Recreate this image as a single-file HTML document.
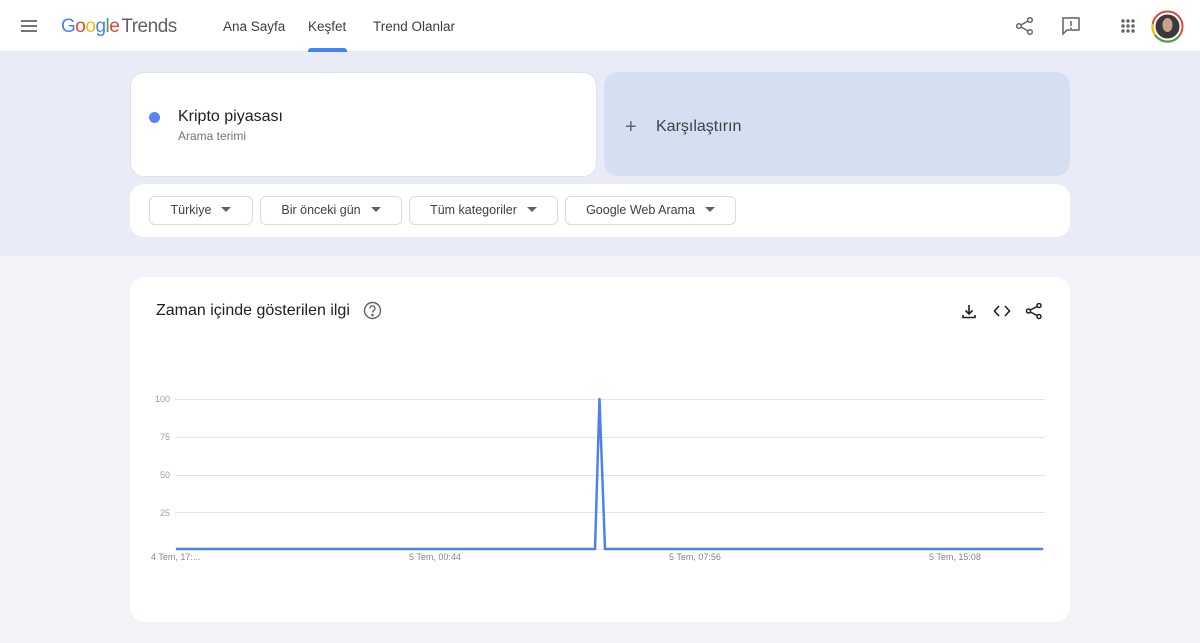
<!DOCTYPE html>
<html><head><meta charset="utf-8"><style>
*{box-sizing:border-box;margin:0;padding:0}
body{width:1200px;height:643px;overflow:hidden;background:#f1f3f8;font-family:"Liberation Sans",Arial,sans-serif;color:#202124;position:relative}
.hdr{position:absolute;left:0;top:0;width:1200px;height:52px;background:#fff;border-bottom:1px solid #e3e6ee}
.band{position:absolute;left:0;top:52px;width:1200px;height:204px;background:#e9ecf6}
.abs{position:absolute}
.nav{position:absolute;top:19px;font-size:13.5px;color:#3c4043}
.card{position:absolute;background:#fff;border-radius:14px}
.chip{position:absolute;top:196px;height:29px;border:1px solid #dadce0;border-radius:6px;font-size:12.5px;color:#3c4043;line-height:27px;text-align:center}
.chip:after{content:"";display:inline-block;margin-left:10px;border-left:5px solid transparent;border-right:5px solid transparent;border-top:5px solid #5f6368;vertical-align:2px}
.yl{position:absolute;left:140px;width:30px;text-align:right;font-size:9px;color:#9aa0a6}
.xl{position:absolute;top:552px;font-size:9px;color:#80868b}
</style></head><body>
<div class="hdr"></div>
<div class="band"></div>
<svg class="abs" style="left:20px;top:18px" width="18" height="16"><path d="M1 3h16M1 8h16M1 13h16" stroke="#5f6368" stroke-width="1.8"/></svg>
<div class="abs" style="left:61px;top:16px;font-size:19px;letter-spacing:-0.5px"><span style="color:#4285f4">G</span><span style="color:#ea4335">o</span><span style="color:#fbbc05">o</span><span style="color:#4285f4">g</span><span style="color:#34a853">l</span><span style="color:#ea4335">e</span><span style="color:#5f6368;margin-left:2px">Trends</span></div>
<div class="nav" style="left:223px">Ana Sayfa</div>
<div class="nav" style="left:308px">Keşfet</div>
<div class="abs" style="left:308px;top:48px;width:39px;height:4px;background:#4285f4;border-radius:3px 3px 0 0"></div>
<div class="nav" style="left:373px">Trend Olanlar</div>
<svg class="abs" style="left:1015px;top:16px" width="20" height="20" viewBox="0 0 20 20" fill="none" stroke="#5f6368" stroke-width="1.5"><circle cx="15" cy="4" r="2.3"/><circle cx="4" cy="10" r="2.3"/><circle cx="15" cy="16" r="2.3"/><path d="M6 9l7-4M6 11l7 4"/></svg>
<svg class="abs" style="left:1061px;top:16px" width="20" height="20" viewBox="0 0 20 20" fill="none" stroke="#5f6368" stroke-width="1.5"><path d="M2 2h16v12H6l-4 4z"/><path d="M10 5v5M10 11.5v1.5"/></svg>
<svg class="abs" style="left:1120px;top:18px" width="16" height="16" fill="#5f6368"><circle cx="3" cy="3" r="1.7"/><circle cx="8" cy="3" r="1.7"/><circle cx="13" cy="3" r="1.7"/><circle cx="3" cy="8" r="1.7"/><circle cx="8" cy="8" r="1.7"/><circle cx="13" cy="8" r="1.7"/><circle cx="3" cy="13" r="1.7"/><circle cx="8" cy="13" r="1.7"/><circle cx="13" cy="13" r="1.7"/></svg>
<svg class="abs" style="left:1151px;top:10px" width="33" height="33"><circle cx="16.5" cy="16.5" r="15" fill="none" stroke="#ea4335" stroke-width="2"/><path d="M4 25A15 15 0 0 0 29 25" fill="none" stroke="#34a853" stroke-width="2"/><path d="M2 14A15 15 0 0 0 4 25" fill="none" stroke="#fbbc05" stroke-width="2"/><circle cx="16.5" cy="16.5" r="12" fill="#3a3a3a"/><ellipse cx="16.5" cy="15" rx="5" ry="7" fill="#c9a08a"/></svg>

<div class="card" style="left:130px;top:72px;width:467px;height:105px;border:1px solid #dde1ea"></div>
<div class="abs" style="left:149px;top:112px;width:11px;height:11px;border-radius:50%;background:#5687f0"></div>
<div class="abs" style="left:178px;top:108px;font-size:16px">Kripto piyasası</div>
<div class="abs" style="left:178px;top:129px;font-size:12px;color:#70757a">Arama terimi</div>
<div class="abs" style="left:604px;top:72px;width:466px;height:104px;background:#d6def1;border-radius:14px"></div>
<div class="abs" style="left:625px;top:116px;font-size:20px;color:#5f6368;font-weight:300">+</div>
<div class="abs" style="left:656px;top:118px;font-size:16px;color:#3c4043">Karşılaştırın</div>
<div class="card" style="left:130px;top:184px;width:940px;height:53px"></div>
<div class="chip" style="left:149px;width:104px">Türkiye</div>
<div class="chip" style="left:260px;width:142px">Bir önceki gün</div>
<div class="chip" style="left:409px;width:149px">Tüm kategoriler</div>
<div class="chip" style="left:565px;width:171px">Google Web Arama</div>

<div class="card" style="left:130px;top:277px;width:940px;height:345px"></div>
<div class="abs" style="left:156px;top:302px;font-size:16px">Zaman içinde gösterilen ilgi</div>
<svg class="abs" style="left:363px;top:301px" width="19" height="19" viewBox="0 0 19 19" fill="none" stroke="#5f6368" stroke-width="1.4"><circle cx="9.5" cy="9.5" r="8"/><path d="M7 7.5a2.5 2.5 0 1 1 3.5 2.2c-.8.4-1 .9-1 1.8"/><circle cx="9.5" cy="14" r=".6" fill="#5f6368"/></svg>
<svg class="abs" style="left:961px;top:303px" width="16" height="16" fill="none" stroke="#202124" stroke-width="1.6"><path d="M8 2v9M4.5 7.5L8 11l3.5-3.5M2 12v2.5h12V12"/></svg>
<svg class="abs" style="left:993px;top:304px" width="18" height="14" fill="none" stroke="#202124" stroke-width="1.6"><path d="M6 2L1.5 7 6 12M12 2l4.5 5-4.5 5"/></svg>
<svg class="abs" style="left:1025px;top:302px" width="18" height="18" viewBox="0 0 18 18" fill="none" stroke="#202124" stroke-width="1.5"><circle cx="14" cy="3.5" r="2"/><circle cx="3.5" cy="9" r="2"/><circle cx="14" cy="14.5" r="2"/><path d="M5.3 8l6.9-3.6M5.3 10l6.9 3.6"/></svg>

<svg class="abs" style="left:0;top:0" width="1200" height="643">
<g stroke="#e3e3e3" stroke-width="1"><path d="M175 399.5H1045M175 437.5H1045M175 475.5H1045M175 512.5H1045M175 549.5H1045"/></g>
<polyline points="176,549 595,549 599.5,399 605,549 1043,549" fill="none" stroke="#4f81ee" stroke-width="2.5" stroke-linejoin="round"/>
</svg>
<div class="yl" style="top:394px">100</div>
<div class="yl" style="top:432px">75</div>
<div class="yl" style="top:470px">50</div>
<div class="yl" style="top:508px">25</div>
<div class="xl" style="left:151px">4 Tem, 17:...</div>
<div class="xl" style="left:409px">5 Tem, 00:44</div>
<div class="xl" style="left:669px">5 Tem, 07:56</div>
<div class="xl" style="left:929px">5 Tem, 15:08</div>
</body></html>
